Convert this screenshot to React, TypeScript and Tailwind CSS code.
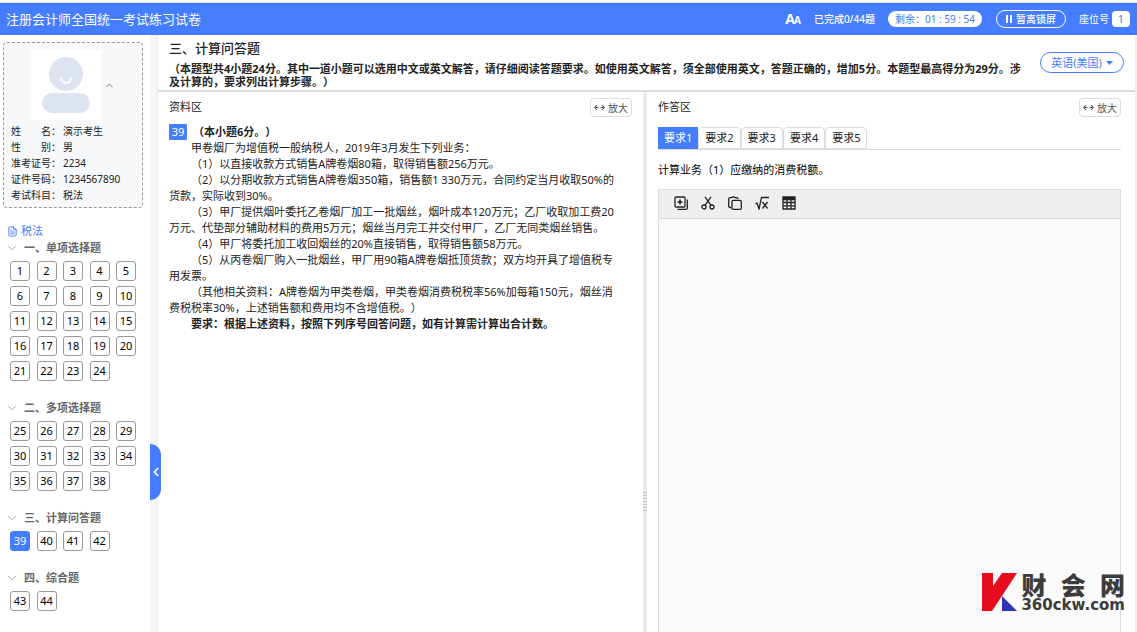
import React, { useState } from 'react';
import { ChevronDown, ChevronUp, ChevronLeft, FileText } from 'lucide-react';

const sections = [
  { title: '一、单项选择题', from: 1, to: 24 },
  { title: '二、多项选择题', from: 25, to: 38 },
  { title: '三、计算问答题', from: 39, to: 42 },
  { title: '四、综合题', from: 43, to: 44 },
];

const candidate = [
  { label: ['姓', '名：'], value: '演示考生' },
  { label: ['性', '别：'], value: '男' },
  { label: ['准考证号：'], value: '2234' },
  { label: ['证件号码：'], value: '1234567890' },
  { label: ['考试科目：'], value: '税法' },
];

const paragraphs = [
  '甲卷烟厂为增值税一般纳税人，2019年3月发生下列业务：',
  '（1）以直接收款方式销售A牌卷烟80箱，取得销售额256万元。',
  '（2）以分期收款方式销售A牌卷烟350箱，销售额1 330万元，合同约定当月收取50%的货款，实际收到30%。',
  '（3）甲厂提供烟叶委托乙卷烟厂加工一批烟丝，烟叶成本120万元；乙厂收取加工费20万元、代垫部分辅助材料的费用5万元；烟丝当月完工并交付甲厂，乙厂无同类烟丝销售。',
  '（4）甲厂将委托加工收回烟丝的20%直接销售，取得销售额58万元。',
  '（5）从丙卷烟厂购入一批烟丝，甲厂用90箱A牌卷烟抵顶货款；双方均开具了增值税专用发票。',
  '（其他相关资料：A牌卷烟为甲类卷烟，甲类卷烟消费税税率56%加每箱150元，烟丝消费税税率30%，上述销售额和费用均不含增值税。）',
];

const tabs = ['要求1', '要求2', '要求3', '要求4', '要求5'];

const Avatar = () => (
  <svg viewBox="0 0 70 70" className="size-[70px] bg-white">
    <circle cx="35" cy="24" r="17" fill="#dde4ef" />
    <rect x="11" y="43" width="48" height="20" rx="10" fill="#dde4ef" />
    <path d="M30 28a5 5 0 0 0 10 0" fill="none" stroke="#fff" strokeWidth="2" strokeLinecap="round" />
  </svg>
);

const tools = [
  {
    name: '插入',
    icon: (
      <>
        <rect x="1" y="1" width="10" height="10" rx="1" />
        <path d="M6 3.5v5M3.500 6h5" strokeWidth="1.6" />
        <path d="M13.3 3.500V12a1.300 1.300 0 0 1-1.300 1.300H3.500" />
      </>
    ),
  },
  {
    name: '剪切',
    icon: (
      <>
        <circle cx="3" cy="11" r="2" />
        <circle cx="11" cy="11" r="2" />
        <path d="M4 9.300 10 .8M10 9.300 4 .8" />
      </>
    ),
  },
  {
    name: '粘贴',
    icon: (
      <>
        <path d="M3 11.500H2a1.300 1.300 0 0 1-1.300-1.300V3A1.300 1.300 0 0 1 2 1.700h1.500a1.800 1.200 0 0 1 3.500 0h1.500A1.300 1.300 0 0 1 10 3" />
        <rect x="4" y="4.300" width="9.300" height="9" rx="1.300" fill="#efefef" />
      </>
    ),
  },
  {
    name: '公式',
    icon: <path d="M.5 8 2 7l2 6L6.500 1.500H14M7.500 6l5 6.500M12.500 6l-5 6.500" />,
  },
  {
    name: '表格',
    icon: (
      <>
        <path d="M1 1h12v2.500H1z" fill="currentColor" />
        <path d="M1 3.500v9.500h12V3.500M1 6.500h12M1 9.800h12M5 3.500v9.500M9 3.500v9.500" />
      </>
    ),
  },
];

const ZoomButton = () => (
  <button type="button" className="flex h-[19px] items-center gap-[3px] rounded-sm border border-[#dcdcdc] bg-white px-[3px] text-[10px] text-[#555]">
    <svg viewBox="0 0 11 7" className="h-[7px] w-[11px]" fill="none" stroke="currentColor" strokeWidth="1.1">
      <path d="M3 1 .8 3.500 3 6M.8 3.500h3.700M8 1l2.200 2.500L8 6M10.200 3.500H6.500" />
    </svg>
    放大
  </button>
);

const Sidebar = ({ current, onSelect }: { current: number; onSelect: (n: number) => void }) => (
  <aside className="w-[150px] shrink-0 bg-white pt-[7px]">
    <div className="mr-[7px] ml-[3px] rounded-sm border border-dashed border-[#999] bg-[#f7f8fa] pt-[7px] pb-1 pl-[7px]">
      <div className="flex items-center gap-[3px] pl-5">
        <Avatar />
        <ChevronUp size={11} strokeWidth={2.5} className="text-[#aaa]" />
      </div>
      <dl className="mt-[3px] text-[10px] leading-4 text-[#222]">
        {candidate.map((row) => (
          <div key={row.value} className="flex gap-[2px]">
            <dt className="flex w-[50px] justify-between">
              {row.label.map((part) => (
                <span key={part}>{part}</span>
              ))}
            </dt>
            <dd>{row.value}</dd>
          </div>
        ))}
      </dl>
    </div>

    <nav className="pt-[15px] text-[11px] leading-4">
      <a href="#tax" className="flex items-center gap-[3px] pl-[7px] text-[#447dff]">
        <FileText size={11} />
        税法
      </a>
      {sections.map((section) => (
        <section key={section.title} className="mb-[19px] first-of-type:mt-px">
          <h3 className="mb-[5px] flex items-center gap-[5px] pl-[5px] font-bold text-[#666]">
            <ChevronDown size={14} strokeWidth={1.5} className="text-[#999]" />
            {section.title}
          </h3>
          <div className="grid grid-cols-[repeat(5,20px)] justify-between gap-y-[5px] pr-[14px] pl-[10px]">
            {Array.from({ length: section.to - section.from + 1 }, (_, i) => section.from + i).map((n) => (
              <button
                key={n}
                type="button"
                onClick={() => onSelect(n)}
                className={
                  n === current
                    ? 'h-5 rounded-[3px] border border-[#447dff] bg-[#447dff] text-white'
                    : 'h-5 rounded-[3px] border border-[#999] bg-white text-black'
                }
              >
                {n}
              </button>
            ))}
          </div>
        </section>
      ))}
    </nav>
  </aside>
);

const App = () => {
  const [current, setCurrent] = useState(39);
  const [tab, setTab] = useState(0);
  const [answer, setAnswer] = useState('');

  return (
    <div className="relative flex min-h-screen flex-col bg-white font-['Noto_Sans','Noto_Sans_CJK_SC',sans-serif] text-[11px] leading-4 text-[#222] [text-spacing-trim:space-all]">
      <header className="mt-[2px] flex h-[33px] items-center border-t border-[#e5e5e5] bg-[#447dff] pr-[7px] pl-[6px] text-[10px] text-white">
        <h1 className="flex-1 text-[13px]">注册会计师全国统一考试练习试卷</h1>
        <button type="button" aria-label="字号" className="mr-[13px] flex items-baseline font-['Open_Sans',sans-serif] font-bold">
          <span className="text-[14px]">A</span>
          <span className="-ml-px text-[10px]">A</span>
        </button>
        <span className="mr-[13px] font-medium">已完成0/44题</span>
        <span className="mr-[14px] rounded-full bg-white px-[7px] text-[#447dff]">剩余：01 : 59 : 54</span>
        <button type="button" className="mr-[13px] flex h-[18px] items-center gap-1 rounded-full border border-white px-[9px] font-medium">
          <svg viewBox="0 0 6 8" className="h-2 w-[6px]" fill="currentColor">
            <path d="M0 0h2v8H0zM4 0h2v8H4z" />
          </svg>
          暂离锁屏
        </button>
        <span className="mr-[3px]">座位号</span>
        <span className="w-[18px] rounded-sm bg-white text-center text-[11px] text-[#447dff]">1</span>
      </header>

      <div className="flex flex-1">
        <Sidebar current={current} onSelect={setCurrent} />
        <div className="relative w-2 shrink-0 border-r border-[#ececec] bg-[#f6f6f6]">
          <button
            type="button"
            aria-label="收起"
            className="absolute top-[409px] left-0 flex h-14 w-[11px] items-center justify-center rounded-r-xl bg-[#447dff] text-white"
          >
            <ChevronLeft size={14} strokeWidth={3} className="shrink-0" />
          </button>
        </div>

        <main className="flex min-w-0 flex-1 flex-col border-r-2 border-[#f0f0f0]">
          <div className="flex items-start justify-between border-b-2 border-[#dcdcdc] pt-[5px] pr-[11px] pb-[2px] pl-[11px]">
            <div className="flex-1">
              <h2 className="text-[13px] font-medium">三、计算问答题</h2>
              <p className="mt-[6px] pr-3 leading-[13px] font-bold">
                （本题型共4小题24分。其中一道小题可以选用中文或英文解答，请仔细阅读答题要求。如使用英文解答，须全部使用英文，答题正确的，增加5分。本题型最高得分为29分。涉及计算的，要求列出计算步骤。）
              </p>
            </div>
            <button type="button" className="mt-3 flex h-[21px] w-[84px] shrink-0 items-center justify-center gap-1 rounded-full border border-[#447dff] text-[#447dff]">
              英语(美国)
              <svg viewBox="0 0 7 4" className="h-1 w-[7px]" fill="currentColor">
                <path d="M0 0h7L3.500 4z" />
              </svg>
            </button>
          </div>

          <div className="flex flex-1">
            <section className="min-w-0 flex-1 px-[11px] pt-[6px]">
              <div className="flex items-start justify-between">
                <h3 className="pt-[1px]">资料区</h3>
                <ZoomButton />
              </div>
              <div className="mt-[7px] pr-3">
                <p className="flex gap-[6px] font-bold">
                  <span className="w-[18px] rounded-[1px] bg-[#447dff] text-center font-normal text-white">39</span>
                  （本小题6分。）
                </p>
                {paragraphs.map((text) => (
                  <p key={text} className="indent-[2em]">
                    {text}
                  </p>
                ))}
                <p className="indent-[2em] font-bold">要求：根据上述资料，按照下列序号回答问题，如有计算需计算出合计数。</p>
              </div>
            </section>

            <div className="flex w-1 shrink-0 flex-col items-center justify-end gap-[2px] bg-[#ececec] pb-[121px]">
              {[0, 1, 2, 3, 4, 5, 6].map((n) => (
                <span key={n} className="h-px w-1 bg-[#c4c4c4]" />
              ))}
            </div>

            <section className="flex min-w-0 flex-1 flex-col pt-[6px] pr-[14px] pl-[11px]">
              <div className="flex items-start justify-between">
                <h3 className="pt-[1px]">作答区</h3>
                <ZoomButton />
              </div>
              <div role="tablist" className="mt-[10px] flex border-b border-[#dcdcdc]">
                {tabs.map((name, i) => (
                  <button
                    key={name}
                    type="button"
                    role="tab"
                    aria-selected={i === tab}
                    onClick={() => setTab(i)}
                    className={
                      i === tab
                        ? 'h-[22px] border border-[#447dff] bg-[#447dff] px-[5px] text-white'
                        : 'h-[22px] rounded-t-sm border border-[#dcdcdc] bg-white px-[6px]'
                    }
                  >
                    {name}
                  </button>
                ))}
              </div>
              <label htmlFor="answer" className="mt-3 text-black">
                计算业务（1）应缴纳的消费税额。
              </label>
              <div className="mt-[11px] flex flex-1 flex-col border border-b-0 border-[#dcdcdc]">
                <div className="flex h-[29px] items-center gap-[13px] border-b border-[#dcdcdc] bg-[#efefef] pb-[2px] pl-[15px]">
                  {tools.map((tool) => (
                    <button key={tool.name} type="button" aria-label={tool.name}>
                      <svg viewBox="0 0 14 14" className="size-[14px]" fill="none" stroke="currentColor" strokeWidth="1.3">
                        {tool.icon}
                      </svg>
                    </button>
                  ))}
                </div>
                <textarea
                  id="answer"
                  value={answer}
                  onChange={(e) => setAnswer(e.target.value)}
                  className="w-full flex-1 resize-none bg-[#fafafa] p-2 outline-none"
                />
              </div>
            </section>
          </div>
        </main>
      </div>

      {/* site mark over the editor */}
      <div className="pointer-events-none absolute right-3 bottom-[21px] flex items-end gap-1 text-[#3c3c3c]">
        <svg viewBox="0 0 35 38" className="h-[38px] w-[35px]">
          <path d="M0 0h11v13L20 0h15L10 38H0z" fill="#e60b1e" />
          <path d="M20 23l15 15H20z" fill="#2f35b5" />
        </svg>
        <div className="flex flex-col">
          <div className="flex justify-between text-[25px] leading-7 font-black">
            <span>财</span>
            <span>会</span>
            <span>网</span>
          </div>
          <span className="font-['DejaVu_Sans',sans-serif] text-[15px] leading-3 font-bold">360ckw.com</span>
        </div>
      </div>
    </div>
  );
};

export default App;
